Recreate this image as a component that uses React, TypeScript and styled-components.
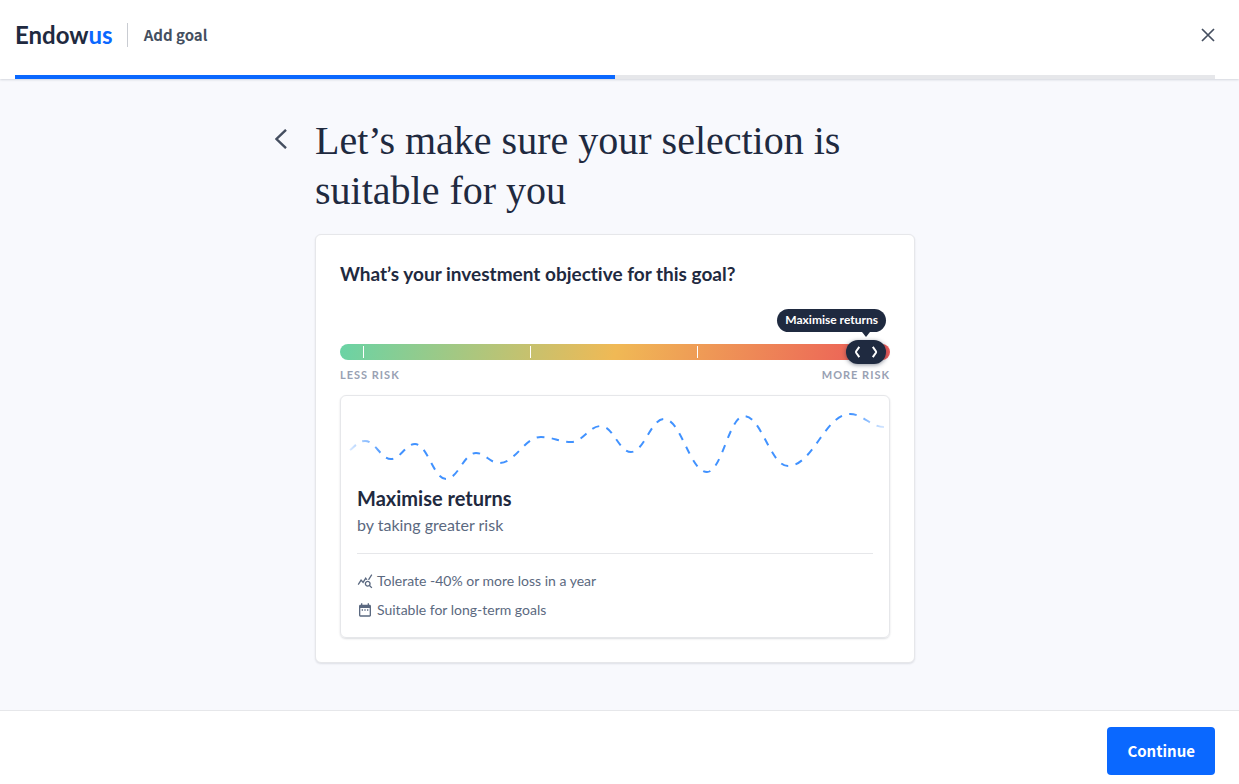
import React, { useState } from "react";
import styled, { createGlobalStyle } from "styled-components";
import { MdDateRange, MdQueryStats } from "react-icons/md";

const ink = "#1f2a40";
const slate = "#5b6980";
const line = "#e6e7ea";
const blue = "#0a68ff";
const uiFont = `"Noto Sans CJK SC", Lato, sans-serif`;

const GlobalStyle = createGlobalStyle`
  *, *::before, *::after { box-sizing: border-box; }
  body {
    margin: 0;
    background: #f8f9fd;
    color: ${ink};
    font-family: Lato, "Liberation Sans", sans-serif;
    font-variant-ligatures: none;
  }
  h1, h2, h3, p, ul { margin: 0; padding: 0; }
  button { font: inherit; cursor: pointer; }
`;

const Page = styled.div`
  display: flex;
  flex-direction: column;
  min-height: 100vh;
`;

const Header = styled.header`
  display: flex;
  flex-direction: column;
  padding: 0 24px 0 15px;
  background: #fff;
  box-shadow: 0 1px 2px rgba(31, 42, 64, 0.16);
`;

const TopBar = styled.div`
  display: flex;
  align-items: center;
  height: 75px;
  padding-bottom: 5px;
`;

const Logo = styled.a`
  color: ${ink};
  font-size: 24px;
  font-weight: 700;
  line-height: 24px;
  text-decoration: none;
`;

const LogoAccent = styled.span`
  color: ${blue};
`;

const FlowName = styled.span`
  margin-left: 14px;
  padding-left: 16px;
  border-left: 1px solid #c9ccd2;
  color: #454f60;
  font-family: ${uiFont};
  font-size: 15px;
  font-weight: 700;
  line-height: 24px;
`;

const IconButton = styled.button<{ $push?: boolean }>`
  display: flex;
  flex: none;
  margin: 0 0 0 ${(p) => (p.$push ? "auto" : "0")};
  padding: 0;
  border: 0;
  background: none;
  color: #454f60;
`;

const Progress = styled.div`
  height: 4px;
  background: ${line};
`;

const ProgressFill = styled.div`
  height: 100%;
  background: ${blue};
`;

const Main = styled.main`
  flex: 1;
  display: flex;
  justify-content: center;
  padding: 37px 24px 47px 15px;
`;

const Column = styled.div`
  display: grid;
  grid-template-columns: 40px minmax(0, 600px) 40px;
  row-gap: 18px;
`;

const BackCell = styled.div`
  padding-top: 13px;
`;

const Title = styled.h1`
  font-family: "Liberation Serif", serif;
  font-size: 40px;
  font-weight: 400;
  line-height: 50px;
`;

const Card = styled.section`
  grid-column: 2;
  padding: 24px;
  border: 1px solid ${line};
  border-radius: 6px;
  background: #fff;
  box-shadow: 0 1px 2px rgba(31, 42, 64, 0.12);
`;

const Question = styled.h2`
  font-size: 19px;
  font-weight: 700;
  line-height: 30px;
`;

const Slider = styled.div`
  position: relative;
  margin-top: 55px;
`;

const Track = styled.div`
  display: flex;
  justify-content: space-between;
  align-items: center;
  height: 16px;
  padding: 0 25px 0 23px;
  border-radius: 8px;
  background: linear-gradient(100deg, #6ad3a5 0%, #f0b955 50%, #ec5858 100%);
`;

const Tick = styled.span`
  width: 1px;
  height: 12px;
  background: #fff;
`;

const ThumbRail = styled.div`
  position: absolute;
  inset: -4px 24px;
`;

const Thumb = styled.div`
  position: absolute;
  top: 0;
  display: flex;
  align-items: center;
  justify-content: center;
  width: 40px;
  height: 24px;
  margin-left: -20px;
  border-radius: 12px;
  background: ${ink};
  color: #fff;
  box-shadow: 0 1px 4px rgba(31, 42, 64, 0.5);
`;

const Tooltip = styled.output`
  position: absolute;
  right: 0;
  bottom: 32px;
  padding: 0 8px 1px;
  border-radius: 12px;
  background: ${ink};
  color: #fff;
  font-size: 12px;
  font-weight: 700;
  line-height: 22px;
  white-space: nowrap;

  &::after {
    content: "";
    position: absolute;
    top: 100%;
    right: 16px;
    border: 4px solid transparent;
    border-top: 5px solid ${ink};
    border-bottom: 0;
  }
`;

const Range = styled.input`
  position: absolute;
  inset: -4px 4px;
  width: calc(100% - 8px);
  height: 24px;
  margin: 0;
  opacity: 0;
  cursor: pointer;
`;

const Ends = styled.div`
  display: flex;
  justify-content: space-between;
  margin-top: 8px;
  color: #98a1b3;
  font-size: 11px;
  font-weight: 700;
  letter-spacing: 1px;
  line-height: 14px;
  text-transform: uppercase;
`;

const Outcome = styled.article`
  margin-top: 13px;
  padding: 8px 16px 15px;
  border: 1px solid ${line};
  border-radius: 6px;
  box-shadow: 0 1px 2px rgba(31, 42, 64, 0.16);
`;

const Chart = styled.svg`
  display: block;
  width: calc(100% + 32px);
  margin: 0 -16px;
`;

const OutcomeTitle = styled.h3`
  font-size: 20px;
  font-weight: 700;
  line-height: 24px;
`;

const OutcomeText = styled.p`
  padding: 2px 0 15px;
  border-bottom: 1px solid ${line};
  color: ${slate};
  font-size: 16px;
  line-height: 26px;
`;

const Facts = styled.ul`
  display: grid;
  gap: 5px;
  padding-top: 15px;
  list-style: none;
`;

const Fact = styled.li`
  display: flex;
  align-items: center;
  gap: 4px;
  color: ${slate};
  font-size: 14px;
  line-height: 24px;
`;

const Footer = styled.footer`
  display: flex;
  justify-content: flex-end;
  padding: 16px 24px 9px;
  border-top: 1px solid ${line};
  background: #fff;
`;

const Continue = styled.button`
  height: 48px;
  padding: 0 20px 2px;
  border: 0;
  border-radius: 4px;
  background: ${blue};
  color: #fff;
  font-family: ${uiFont};
  font-size: 15px;
  font-weight: 700;
`;

const levels = ["Preserve capital", "Steady income", "Balanced growth", "Maximise returns"];

const points = [
  [9, 46], [24, 37], [50, 55], [74, 40], [105, 75], [135, 49], [158, 59],
  [200, 33], [230, 38], [260, 22], [290, 48], [323, 15], [366, 68], [403, 12],
  [447, 62], [509, 10], [543, 23],
];

const wave = points
  .map(([x, y], i) => {
    if (i === 0) return `M${x} ${y}`;
    const [px, py] = points[i - 1];
    const reach = (x - px) * 0.4;
    const lift = i === 1 ? 5 : 0;
    return `C${px + reach} ${py - lift} ${x - reach} ${y} ${x} ${y}`;
  })
  .join(" ");

export default function App() {
  const [level, setLevel] = useState(3);

  return (
    <Page>
      <GlobalStyle />
      <Header>
        <TopBar>
          <Logo href="#">
            Endow<LogoAccent>us</LogoAccent>
          </Logo>
          <FlowName>Add goal</FlowName>
          <IconButton $push aria-label="Close">
            <svg width="15" height="14" viewBox="0 0 15 14" fill="none" stroke="currentColor" strokeWidth="1.7">
              <path d="M2 1 14 13M14 1 2 13" />
            </svg>
          </IconButton>
        </TopBar>
        <Progress role="progressbar" aria-valuenow={50} aria-label="Progress">
          <ProgressFill style={{ width: "50%" }} />
        </Progress>
      </Header>

      <Main>
        <Column>
          <BackCell>
            <IconButton aria-label="Back">
              <svg width="14" height="20" viewBox="0 0 14 20" fill="none" stroke="currentColor" strokeWidth="2.4">
                <path d="M11 .8 1.500 10l9.500 9.200" />
              </svg>
            </IconButton>
          </BackCell>
          <Title>Let’s make sure your selection is suitable for you</Title>

          <Card>
            <Question id="objective">What’s your investment objective for this goal?</Question>
            <Slider>
              <Track>
                {levels.map((name) => (
                  <Tick key={name} />
                ))}
              </Track>
              <ThumbRail>
                <Thumb style={{ left: `${(level / 3) * 100}%` }}>
                  <Tooltip>{levels[level]}</Tooltip>
                  <svg width="26" height="12" viewBox="0 0 26 12" fill="none" stroke="currentColor" strokeWidth="2">
                    <path d="M6.300 .8 3.200 5.200Q2.700 6 3.200 6.800L6.300 11.200M19.800 .8 22.900 5.200Q23.400 6 22.900 6.800L19.800 11.200" />
                  </svg>
                </Thumb>
              </ThumbRail>
              <Range
                type="range"
                min={0}
                max={3}
                value={level}
                aria-labelledby="objective"
                onChange={(e) => setLevel(Number(e.target.value))}
              />
            </Slider>
            <Ends>
              <span>Less risk</span>
              <span>More risk</span>
            </Ends>

            <Outcome>
              <Chart viewBox="0 0 548 82" fill="none" aria-hidden="true">
                <defs>
                  <linearGradient id="fade" gradientUnits="userSpaceOnUse" x1="0" y1="0" x2="548" y2="0">
                    <stop offset="0" stopColor="#4192ff" stopOpacity="0" />
                    <stop offset="0.080" stopColor="#4192ff" />
                    <stop offset="0.930" stopColor="#4192ff" />
                    <stop offset="1" stopColor="#4192ff" stopOpacity="0.100" />
                  </linearGradient>
                </defs>
                <path d={wave} stroke="url(#fade)" strokeWidth="2" pathLength={679} strokeDasharray="7 7" />
              </Chart>
              <OutcomeTitle>{levels[level]}</OutcomeTitle>
              <OutcomeText>by taking greater risk</OutcomeText>
              <Facts>
                <Fact>
                  <MdQueryStats size={16} />
                  Tolerate -40% or more loss in a year
                </Fact>
                <Fact>
                  <MdDateRange size={16} />
                  Suitable for long-term goals
                </Fact>
              </Facts>
            </Outcome>
          </Card>
        </Column>
      </Main>

      <Footer>
        <Continue type="button">Continue</Continue>
      </Footer>
    </Page>
  );
}
